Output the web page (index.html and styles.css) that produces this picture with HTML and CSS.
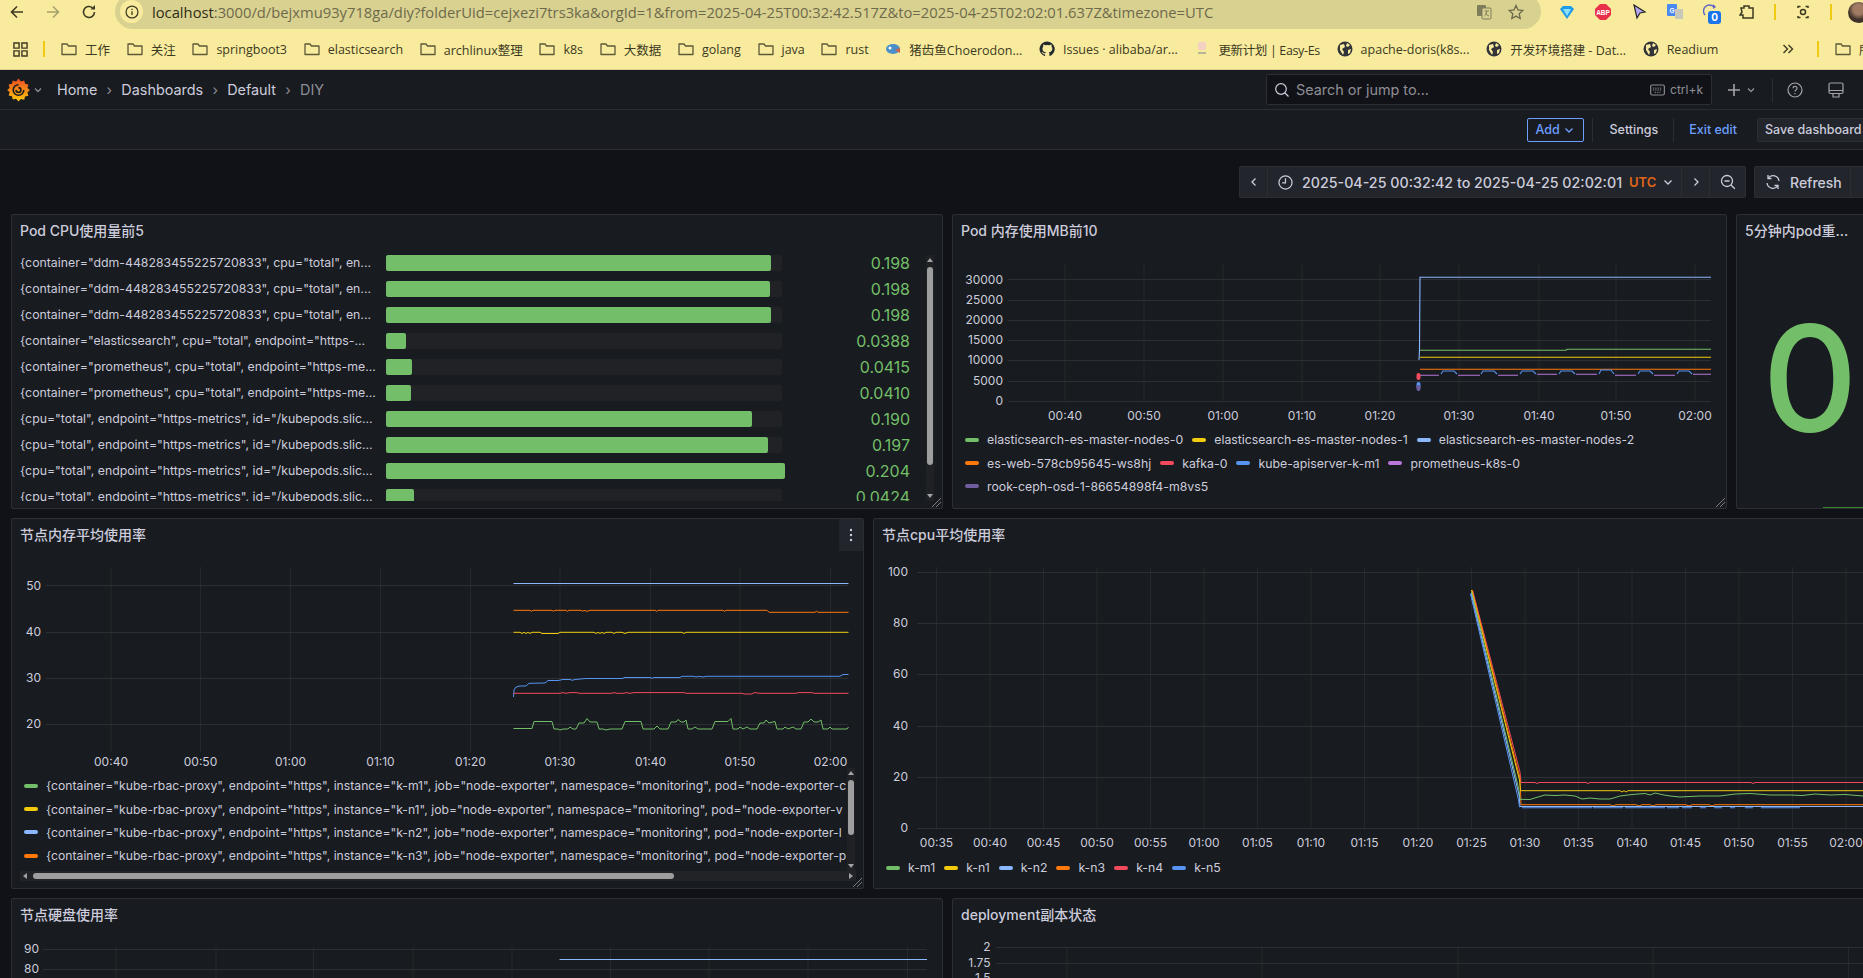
FILE: index.html
```html
<!DOCTYPE html>
<html>
<head>
  <meta charset="UTF-8">
  <title>DIY - Dashboards - Grafana</title>
  <link rel="stylesheet" href="styles.css">
</head>
<body>
  <!-- Browser window top -->
  <div class="browser-bar">
    <svg class="nav-btn" viewBox="0 0 16 16"><path d="M14 8H2.5M8 2.5L2.5 8 8 13.5" fill="none" stroke="#3d3a22" stroke-width="1.6"/></svg>
    <svg class="nav-btn" viewBox="0 0 16 16"><path d="M2 8h11.5M8 2.5L13.5 8 8 13.5" fill="none" stroke="#a5a06e" stroke-width="1.6"/></svg>
    <svg class="nav-btn" viewBox="0 0 16 16"><path d="M13.5 8A5.5 5.5 0 1 1 11.6 3.8" fill="none" stroke="#3d3a22" stroke-width="1.6"/><path d="M9.5 5.5H14V1z" fill="#3d3a22"/></svg>
    <div class="address-bar">
      <span class="site-info"><svg viewBox="0 0 16 16" width="14" height="14"><circle cx="8" cy="8" r="6.8" fill="none" stroke="#3d3a22" stroke-width="1.4"/><path d="M8 7v4.5M8 4.2v1.4" stroke="#3d3a22" stroke-width="1.5"/></svg></span>
      <span class="url"><b>localhost</b>:3000/d/bejxmu93y718ga/diy?folderUid=cejxezi7trs3ka&amp;orgId=1&amp;from=2025-04-25T00:32:42.517Z&amp;to=2025-04-25T02:02:01.637Z&amp;timezone=UTC</span>
      <svg class="addr-icon" viewBox="0 0 16 16"><rect x="1" y="1" width="9" height="11" rx="1" fill="#7f7c5c"/><rect x="6" y="4" width="9" height="11" rx="1" fill="#d9d190" stroke="#7f7c5c"/><path d="M8.5 7h4.5M10.5 7c0 3-1 4.500-2 5M9.500 9c1 1.500 2 2.500 3.500 3" stroke="#7f7c5c" fill="none"/></svg>
      <svg class="addr-icon star" viewBox="0 0 16 16"><path d="M8 1.5l2 4.500 4.800.5-3.600 3.200 1 4.800L8 12.100 3.800 14.500l1-4.800L1.200 6.500 6 6z" fill="none" stroke="#6d6a4c" stroke-width="1.300"/></svg>
    </div>
    <div class="ext-icons">
      <svg viewBox="0 0 16 16"><path d="M1 5l3-3h8l3 3-7 10z" fill="#1e9be8"/><path d="M4 5h8L8 12z" fill="#8fe0fb"/></svg>
      <svg viewBox="0 0 16 16"><path d="M5 0h6l5 5v6l-5 5H5l-5-5V5z" fill="#e8304b"/><text x="8" y="10.500" class="abp">ABP</text></svg>
      <svg viewBox="0 0 16 16"><path d="M3 1l11 7-5 1-3 5z" fill="#b9a8f0" stroke="#222" stroke-width="1.200"/></svg>
      <svg viewBox="0 0 16 16"><rect x="0" y="0" width="10" height="12" rx="1" fill="#4a8af0"/><rect x="8" y="5" width="8" height="10" fill="#c9c8b8"/><text x="5" y="9" class="abp">G</text></svg>
      <span class="ext-badge-wrap"><svg viewBox="0 0 16 16"><path d="M2 11A5.500 5.500 0 0 1 11 3" fill="none" stroke="#5d63c9" stroke-width="1.400"/><path d="M10 0l3 3-3 2z" fill="#5d63c9"/></svg><span class="ext-badge">0</span></span>
      <svg viewBox="0 0 16 16"><path d="M2 4h3V2h5v2h4v10H4v-3H1l2-3-1-4z" fill="none" stroke="#3d3a22" stroke-width="1.500"/></svg>
      <i class="toolbar-divider"></i>
      <svg viewBox="0 0 16 16"><path d="M3 4V2.500h2.500M10.500 2.500H13V4M13 12v1.500h-2.500M5.500 13.500H3V12" fill="none" stroke="#3d3a22" stroke-width="1.500"/><circle cx="8" cy="8" r="2.500" fill="none" stroke="#3d3a22" stroke-width="1.500"/></svg>
      <i class="toolbar-divider"></i>
      <span class="avatar"></span>
    </div>
  </div>

  <div class="bookmarks">
    <svg class="apps-icon" viewBox="0 0 16 16"><path d="M1 1h5.500v5.500H1zM9.500 1H15v5.500H9.500zM1 9.500h5.500V15H1zM9.500 9.500H15V15H9.500z" fill="none" stroke="#3d3a22" stroke-width="1.500"/></svg>
    <i class="toolbar-divider"></i>
    <div class="bookmark"><svg viewBox="0 0 16 16" class="folder"><path d="M1 3h5l1.500 2H15v8.500H1z"/></svg>工作</div>
    <div class="bookmark"><svg viewBox="0 0 16 16" class="folder"><path d="M1 3h5l1.500 2H15v8.500H1z"/></svg>关注</div>
    <div class="bookmark"><svg viewBox="0 0 16 16" class="folder"><path d="M1 3h5l1.500 2H15v8.500H1z"/></svg>springboot3</div>
    <div class="bookmark"><svg viewBox="0 0 16 16" class="folder"><path d="M1 3h5l1.500 2H15v8.500H1z"/></svg>elasticsearch</div>
    <div class="bookmark"><svg viewBox="0 0 16 16" class="folder"><path d="M1 3h5l1.500 2H15v8.500H1z"/></svg>archlinux整理</div>
    <div class="bookmark"><svg viewBox="0 0 16 16" class="folder"><path d="M1 3h5l1.500 2H15v8.500H1z"/></svg>k8s</div>
    <div class="bookmark"><svg viewBox="0 0 16 16" class="folder"><path d="M1 3h5l1.500 2H15v8.500H1z"/></svg>大数据</div>
    <div class="bookmark"><svg viewBox="0 0 16 16" class="folder"><path d="M1 3h5l1.500 2H15v8.500H1z"/></svg>golang</div>
    <div class="bookmark"><svg viewBox="0 0 16 16" class="folder"><path d="M1 3h5l1.500 2H15v8.500H1z"/></svg>java</div>
    <div class="bookmark"><svg viewBox="0 0 16 16" class="folder"><path d="M1 3h5l1.500 2H15v8.500H1z"/></svg>rust</div>
    <div class="bookmark"><svg viewBox="0 0 16 16"><ellipse cx="8" cy="8" rx="7" ry="5" fill="#4a90c8"/><circle cx="5" cy="7" r="1.500" fill="#fff"/><path d="M10 9l5 3v-5z" fill="#d0604a"/></svg>猪齿鱼Choerodon...</div>
    <div class="bookmark"><svg viewBox="0 0 16 16"><path d="M8 .5a7.500 7.500 0 0 0-2.400 14.600c.4.1.5-.2.5-.4v-1.400c-2.100.5-2.500-1-2.500-1-.3-.9-.8-1.100-.8-1.100-.7-.5.1-.5.1-.5.8.1 1.200.8 1.200.8.7 1.200 1.800.8 2.300.6.1-.5.300-.8.500-1-1.700-.2-3.400-.8-3.400-3.700 0-.8.3-1.500.8-2-.1-.2-.3-1 .1-2 0 0 .6-.2 2.100.8a7 7 0 0 1 3.800 0c1.500-1 2.100-.8 2.100-.8.4 1 .2 1.800.1 2 .5.500.8 1.200.8 2 0 2.900-1.800 3.500-3.400 3.700.3.2.5.7.5 1.400v2.100c0 .2.100.5.500.4A7.500 7.500 0 0 0 8 .5z" fill="#24292f"/></svg>Issues · alibaba/ar...</div>
    <div class="bookmark tight"><svg viewBox="0 0 16 16"><rect x="4" y="1" width="8" height="8" rx="2" fill="#f4cfc4"/><rect x="4" y="11" width="8" height="2" fill="#b8b498"/></svg>更新计划 | Easy-Es</div>
    <div class="bookmark"><svg viewBox="0 0 16 16" class="globe"><circle cx="8" cy="8" r="7.500"/><path d="M3 4l4-1 1 3-3 2 2 3-1 3-3-5zM10 2l3 2-2 2-2-1zM11 9l3-1-1 4-2 1z"/></svg>apache-doris(k8s...</div>
    <div class="bookmark"><svg viewBox="0 0 16 16" class="globe"><circle cx="8" cy="8" r="7.500"/><path d="M3 4l4-1 1 3-3 2 2 3-1 3-3-5zM10 2l3 2-2 2-2-1zM11 9l3-1-1 4-2 1z"/></svg>开发环境搭建 - Dat...</div>
    <div class="bookmark"><svg viewBox="0 0 16 16" class="globe"><circle cx="8" cy="8" r="7.500"/><path d="M3 4l4-1 1 3-3 2 2 3-1 3-3-5zM10 2l3 2-2 2-2-1zM11 9l3-1-1 4-2 1z"/></svg>Readium</div>
    <div class="bookmarks-end">
      <svg class="more-marks" viewBox="0 0 12 10" width="12" height="10"><path d="M1.500 1l4 4-4 4M6.500 1l4 4-4 4" fill="none" stroke="#3d3a22" stroke-width="1.400"/></svg>
      <i class="toolbar-divider"></i>
      <div class="bookmark"><svg viewBox="0 0 16 16" class="folder"><path d="M1 3h5l1.500 2H15v8.500H1z"/></svg>所</div>
    </div>
  </div>

  <!-- Grafana top nav -->
  <div class="topnav">
    <svg class="logo" viewBox="0 0 24 24">
      <defs><linearGradient id="logo-grad" x1="0" y1="0" x2="0" y2="1"><stop offset="0" stop-color="#ee4a25"/><stop offset="1" stop-color="#fbca0a"/></linearGradient></defs>
      <path d="M12 0l2.500 3 3.500-1 .8 3.500 3.500.8-1 3.500 2.500 2.200-2.500 2.500 1 3.500-3.500.8-.8 3.500-3.500-1L12 24l-2.500-3-3.500 1-.8-3.500L1.700 17.700l1-3.500L.2 12l2.500-2.200-1-3.500 3.500-.8.8-3.500 3.500 1z" fill="url(#logo-grad)"/>
      <path d="M12 6.500a5.500 5.500 0 1 0 5.500 5.500M12 9.500a2.500 2.500 0 1 1-2.500 2.500" fill="none" stroke="#181b1f" stroke-width="1.700"/>
    </svg>
    <svg class="logo-chevron" viewBox="0 0 10 10"><path d="M2 3.500l3 3 3-3" fill="none" stroke="#8e8e96" stroke-width="1.300"/></svg>
    <div class="breadcrumbs">
      <span>Home</span><i>›</i><span>Dashboards</span><i>›</i><span>Default</span><i>›</i><span class="current">DIY</span>
    </div>
    <div class="topnav-right">
      <div class="search-box">
        <svg viewBox="0 0 16 16" width="16" height="16"><circle cx="7" cy="7" r="5.300" fill="none" stroke="#ccccdc" stroke-width="1.200"/><path d="M11 11l3.500 3.500" stroke="#ccccdc" stroke-width="1.200"/></svg>
        <span class="search-text">Search or jump to...</span>
        <svg class="kbd-icon" viewBox="0 0 16 12" width="15" height="12"><rect x=".7" y=".7" width="14.600" height="10.600" rx="1.500" fill="none" stroke="#8e8e96" stroke-width="1.200"/><path d="M3 4h10M3 6h10M5 8.500h6" stroke="#8e8e96" stroke-dasharray="1.500 1"/></svg>
        <span class="search-hint">ctrl+k</span>
      </div>
      <svg class="plus-icon" viewBox="0 0 14 14" width="14" height="14"><path d="M7 1v12M1 7h12" stroke="#a3a3ad" stroke-width="1.600"/></svg>
      <svg class="nav-chevron" viewBox="0 0 10 10" width="10" height="10"><path d="M2 3.500l3 3 3-3" fill="none" stroke="#8e8e96" stroke-width="1.300"/></svg>
      <i class="nav-divider"></i>
      <svg class="help-icon" viewBox="0 0 16 16" width="16" height="16"><circle cx="8" cy="8" r="7" fill="none" stroke="#a3a3ad" stroke-width="1.200"/><path d="M6 6.300a2 2 0 1 1 3 1.700c-.7.400-1 .8-1 1.500M8 11v1.300" fill="none" stroke="#a3a3ad" stroke-width="1.200"/></svg>
      <svg class="monitor-icon" viewBox="0 0 16 16" width="16" height="16"><rect x="1" y="1" width="14" height="10.500" rx="1.500" fill="none" stroke="#a3a3ad" stroke-width="1.200"/><path d="M1 8.500h14M5 15h6v-3.500H5z" fill="none" stroke="#a3a3ad" stroke-width="1.200"/></svg>
    </div>
  </div>

  <div class="toolbar">
    <button class="add-button">Add <svg viewBox="0 0 10 10" width="10" height="10"><path d="M1.500 3.500L5 7l3.500-3.500" fill="none" stroke="#6e9fff" stroke-width="1.300"/></svg></button>
    <i class="nav-divider"></i>
    <span class="toolbar-link">Settings</span>
    <i class="nav-divider"></i>
    <span class="toolbar-link blue">Exit edit</span>
    <button class="save-button">Save dashboard</button>
  </div>

  <div class="time-row">
    <div class="time-group">
      <div class="time-cell arrow"><svg viewBox="0 0 10 10" width="10" height="10"><path d="M6.500 1.500L3 5l3.500 3.500" fill="none" stroke="#ccccdc" stroke-width="1.300"/></svg></div>
      <div class="time-cell range">
        <svg viewBox="0 0 16 16" width="15" height="15"><circle cx="8" cy="8" r="7" fill="none" stroke="#ccccdc" stroke-width="1.300"/><path d="M8 3.500V8.500H4.500" fill="none" stroke="#ccccdc" stroke-width="1.300"/></svg>
        <span class="time-text">2025-04-25 00:32:42 to 2025-04-25 02:02:01</span>
        <span class="time-zone">UTC</span>
        <svg viewBox="0 0 10 10" width="10" height="10"><path d="M1.500 3.500L5 7l3.500-3.500" fill="none" stroke="#ccccdc" stroke-width="1.300"/></svg>
      </div>
      <div class="time-cell arrow"><svg viewBox="0 0 10 10" width="10" height="10"><path d="M3.500 1.500L7 5 3.500 8.500" fill="none" stroke="#ccccdc" stroke-width="1.300"/></svg></div>
      <div class="time-cell zoom"><svg viewBox="0 0 16 16" width="16" height="16"><circle cx="7" cy="7" r="5.500" fill="none" stroke="#ccccdc" stroke-width="1.300"/><path d="M11 11l3.800 3.800M4.500 7h5" stroke="#ccccdc" stroke-width="1.300"/></svg></div>
    </div>
    <div class="refresh-group">
      <div class="refresh-main">
        <svg viewBox="0 0 16 16" width="16" height="16"><path d="M14 7A6 6 0 0 0 3.200 4.200M2 9a6 6 0 0 0 10.800 2.800" fill="none" stroke="#ccccdc" stroke-width="1.300"/><path d="M3 1v3.500h3.500M13 15v-3.500H9.500" fill="none" stroke="#ccccdc" stroke-width="1.300"/></svg>
        Refresh
      </div>
    </div>
  </div>

  <!-- Dashboard panels -->
  <div class="panel-row row-one">
    <div class="panel panel-cpu">
      <div class="panel-title">Pod CPU使用量前5</div>
      <div class="bar-list">
        <div class="bar-row"><div class="bar-label">{container="ddm-448283455225720833", cpu="total", en...</div><div class="bar-track"><div class="bar-fill" style="width:385px"></div></div><div class="bar-value">0.198</div></div>
        <div class="bar-row"><div class="bar-label">{container="ddm-448283455225720833", cpu="total", en...</div><div class="bar-track"><div class="bar-fill" style="width:384px"></div></div><div class="bar-value">0.198</div></div>
        <div class="bar-row"><div class="bar-label">{container="ddm-448283455225720833", cpu="total", en...</div><div class="bar-track"><div class="bar-fill" style="width:385px"></div></div><div class="bar-value">0.198</div></div>
        <div class="bar-row"><div class="bar-label">{container="elasticsearch", cpu="total", endpoint="https-...</div><div class="bar-track"><div class="bar-fill" style="width:20px"></div></div><div class="bar-value">0.0388</div></div>
        <div class="bar-row"><div class="bar-label">{container="prometheus", cpu="total", endpoint="https-me...</div><div class="bar-track"><div class="bar-fill" style="width:26px"></div></div><div class="bar-value">0.0415</div></div>
        <div class="bar-row"><div class="bar-label">{container="prometheus", cpu="total", endpoint="https-me...</div><div class="bar-track"><div class="bar-fill" style="width:25px"></div></div><div class="bar-value">0.0410</div></div>
        <div class="bar-row"><div class="bar-label">{cpu="total", endpoint="https-metrics", id="/kubepods.slic...</div><div class="bar-track"><div class="bar-fill" style="width:366px"></div></div><div class="bar-value">0.190</div></div>
        <div class="bar-row"><div class="bar-label">{cpu="total", endpoint="https-metrics", id="/kubepods.slic...</div><div class="bar-track"><div class="bar-fill" style="width:382px"></div></div><div class="bar-value">0.197</div></div>
        <div class="bar-row"><div class="bar-label">{cpu="total", endpoint="https-metrics", id="/kubepods.slic...</div><div class="bar-track"><div class="bar-fill" style="width:399px"></div></div><div class="bar-value">0.204</div></div>
        <div class="bar-row"><div class="bar-label">{cpu="total", endpoint="https-metrics", id="/kubepods.slic...</div><div class="bar-track"><div class="bar-fill" style="width:28px"></div></div><div class="bar-value">0.0424</div></div>
      </div>
      <div class="vscroll overlay"><b class="up"></b><span class="vthumb"></span><b class="down"></b></div>
      <svg class="resize-handle" viewBox="0 0 10 10"><path d="M1 10L10 1M5 10l5-5" stroke="#7b7b84"/></svg>
    </div>

    <div class="panel panel-mem">
      <div class="panel-title">Pod 内存使用MB前10</div>
      <svg class="chart" width="773" height="180" viewBox="953 248 773 180">
        <g class="grid-v">
          <path d="M1065 263V401M1144 263V401M1223 263V401M1302 263V401M1380 263V401M1459 263V401M1539 263V401M1616 263V401M1695 263V401"/>
        </g>
        <g class="grid-h">
          <path d="M1008 279.500H1711M1008 300.500H1711M1008 320.500H1711M1008 340.500H1711M1008 360.500H1711M1008 381.500H1711M1008 401.500H1711"/>
        </g>
        <g class="axis end">
          <text x="1003" y="283.500">30000</text><text x="1003" y="304">25000</text><text x="1003" y="324">20000</text><text x="1003" y="344">15000</text><text x="1003" y="364">10000</text><text x="1003" y="385">5000</text><text x="1003" y="405">0</text>
        </g>
        <g class="axis mid">
          <text x="1065" y="420">00:40</text><text x="1144" y="420">00:50</text><text x="1223" y="420">01:00</text><text x="1302" y="420">01:10</text><text x="1380" y="420">01:20</text><text x="1459" y="420">01:30</text><text x="1539" y="420">01:40</text><text x="1616" y="420">01:50</text><text x="1695" y="420">02:00</text>
        </g>
        <polyline class="line" stroke="#73bf69" points="1419,350.300 1566,350.300 1567,349.300 1711,349.300"/>
        <polyline class="line" stroke="#f2cc0c" points="1420,357.300 1711,357.300"/>
        <polyline class="line" stroke="#ff780a" points="1420,369.300 1711,369.300"/>
        <polyline class="line" stroke="#8ab8ff" points="1419,360 1419.500,350 1420,277.300 1711,277.300"/>
        <path class="line" stroke="#b877d9" d="M1420 375.300H1439M1458 375.300H1480M1498 375.300H1518M1537 374.300H1557M1576 374.300H1597M1615 375.300H1636M1654 375.300H1675M1693 374.300H1711"/>
        <path class="line" stroke="#5794f2" d="M1441 374L1443 371H1454L1457 374M1481 374L1483 371H1494L1497 374M1520 374L1522 371H1533L1536 374M1559 374L1561 371H1572L1575 374M1599 374L1601 370H1611L1614 374M1638 374L1640 371H1650L1653 374M1677 374L1679 371H1689L1692 374"/>
        <path class="dot" stroke="#f2495c" d="M1418.500 375V378"/>
        <path class="dot" stroke="#5794f2" d="M1418.500 384V387"/>
        <path class="dot" stroke="#705da0" d="M1418.500 387V389"/>
      </svg>
      <div class="legend wrap">
        <div class="legend-item"><i style="background:#73bf69"></i>elasticsearch-es-master-nodes-0</div>
        <div class="legend-item"><i style="background:#f2cc0c"></i>elasticsearch-es-master-nodes-1</div>
        <div class="legend-item"><i style="background:#8ab8ff"></i>elasticsearch-es-master-nodes-2</div>
        <div class="legend-item"><i style="background:#ff780a"></i>es-web-578cb95645-ws8hj</div>
        <div class="legend-item"><i style="background:#f2495c"></i>kafka-0</div>
        <div class="legend-item"><i style="background:#5794f2"></i>kube-apiserver-k-m1</div>
        <div class="legend-item"><i style="background:#b877d9"></i>prometheus-k8s-0</div>
        <div class="legend-item"><i style="background:#705da0"></i>rook-ceph-osd-1-86654898f4-m8vs5</div>
      </div>
      <svg class="resize-handle" viewBox="0 0 10 10"><path d="M1 10L10 1M5 10l5-5" stroke="#7b7b84"/></svg>
    </div>

    <div class="panel panel-stat">
      <div class="panel-title">5分钟内pod重...</div>
      <div class="stat-value">0</div>
      <span class="stat-spark"></span>
    </div>
  </div>

  <div class="panel-row row-two">
    <div class="panel panel-node-mem">
      <div class="panel-title">节点内存平均使用率</div>
      <div class="panel-menu">
        <svg viewBox="0 0 4 14" width="4" height="14"><circle cx="2" cy="2" r="1.200" fill="#ccccdc"/><circle cx="2" cy="7" r="1.200" fill="#ccccdc"/><circle cx="2" cy="12" r="1.200" fill="#ccccdc"/></svg>
      </div>
      <svg class="chart" width="851" height="216" viewBox="12 552 851 216">
        <g class="grid-v">
          <path d="M111 567V752M200.500 567V752M290.500 567V752M380.500 567V752M470.500 567V752M560 567V752M650.500 567V752M740 567V752M830.500 567V752"/>
        </g>
        <g class="grid-h">
          <path d="M46 585.500H848M46 632.500H848M46 678.500H848M46 724.500H848"/>
        </g>
        <g class="axis end">
          <text x="41" y="589.500">50</text><text x="41" y="636">40</text><text x="41" y="682">30</text><text x="41" y="728">20</text>
        </g>
        <g class="axis mid">
          <text x="111" y="766">00:40</text><text x="200.500" y="766">00:50</text><text x="290.500" y="766">01:00</text><text x="380.500" y="766">01:10</text><text x="470.500" y="766">01:20</text><text x="560" y="766">01:30</text><text x="650.500" y="766">01:40</text><text x="740" y="766">01:50</text><text x="830.500" y="766">02:00</text>
        </g>
        <polyline class="thin" stroke="#8ab8ff" points="513.500,583.500 848.500,583.500"/>
        <polyline class="thin" stroke="#ff780a" points="513.500,610.300 530,610.300 531.500,611.300 533,610.300 552,610.300 553.500,611.300 555,610.300 566,610.300 567.500,611.300 569,610.300 581,610.300 582.500,611.300 584,610.300 587,611.300 590,610.300 655,610.300 656.500,611.300 658,610.300 723,610.300 724.500,611.300 726,610.300 767,610.300 769,612.300 815,612.300 816.500,611.300 818,612.300 848.500,612.300"/>
        <polyline class="thin" stroke="#f2cc0c" points="513.500,632.300 520,632.300 522,633.500 524,632.300 526,633.500 528,632.300 530,633.500 532,632.300 540,632.300 542,633.500 558,633.500 560,632.300 594,632.300 596,633.500 598,632.300 600,633.500 602,632.300 604,633.500 606,632.300 612,632.300 614,633.500 616,632.300 622,632.300 625,633.500 628,632.300 682,632.300 684,633.500 686,632.300 848.500,632.300"/>
        <polyline class="thin" stroke="#5794f2" points="513.500,697 514,690 516,687 520,686 526,686 529,683.300 545,683 548,680.500 558,680.500 563,679.500 570,679.500 572,680.300 575,679.500 586,678.500 622,678.500 625,677.500 650,677.500 652,678.300 654,677.500 680,677.500 682,676.300 694,676.300 696,677 699,676.300 703,677 706,676.300 840,676.300 843,674.500 848.500,674.500"/>
        <polyline class="thin" stroke="#f2495c" points="513.500,693.300 560,693.300 563,692.600 566,693.300 570,692.600 576,692.600 580,693.300 612,693.300 614,692.600 617,693.300 624,693.300 626,692.600 630,693.300 634,692.600 684,692.600 686,693.300 742,693.300 744,694 752,694 754,692.600 760,693.300 796,693.300 798,692.600 812,692.600 814,693.300 848.500,693.300"/>
        <polyline class="thin" stroke="#73bf69" points="513.500,728.500 532,728.500 534,721.500 552,721.500 554,729 558,729 560,730 563,729 568,729 570,727 573,729 576,729 579,723 584,723 587,718.500 590,722 597,722 599,729 603,729 606,730 610,729 622,729 625,721.500 641,721.500 643,729 654,729 657,726 660,729 668,729 671,722 676,722 678,719.500 681,722 684,722 686,720 688,729 692,729 695,727 698,729 712,729 715,721.500 728,721.500 731,718.500 733,729 738,729 740,727 743,729 747,727 750,729 757,729 760,723 764,723 766,720 769,723 775,721.500 777,729 783,729 785,727 788,729 793,727 796,729 801,729 804,722 808,722 811,719 814,722 818,722 821,720 823,729 828,729 830,727 832,729 847,729 848.500,727"/>
      </svg>
      <div class="legend-scroll">
        <div class="legend-lines">
          <div class="legend-item"><i style="background:#73bf69"></i>{container="kube-rbac-proxy", endpoint="https", instance="k-m1", job="node-exporter", namespace="monitoring", pod="node-exporter-c</div>
          <div class="legend-item"><i style="background:#f2cc0c"></i>{container="kube-rbac-proxy", endpoint="https", instance="k-n1", job="node-exporter", namespace="monitoring", pod="node-exporter-v</div>
          <div class="legend-item"><i style="background:#8ab8ff"></i>{container="kube-rbac-proxy", endpoint="https", instance="k-n2", job="node-exporter", namespace="monitoring", pod="node-exporter-l</div>
          <div class="legend-item"><i style="background:#ff780a"></i>{container="kube-rbac-proxy", endpoint="https", instance="k-n3", job="node-exporter", namespace="monitoring", pod="node-exporter-p</div>
        </div>
        <div class="vscroll"><b class="up"></b><span class="vthumb"></span><b class="down"></b></div>
      </div>
      <div class="hscroll"><b class="left"></b><span class="hthumb"></span><b class="right"></b></div>
      <svg class="resize-handle" viewBox="0 0 10 10"><path d="M1 10L10 1M5 10l5-5" stroke="#7b7b84"/></svg>
    </div>

    <div class="panel panel-node-cpu">
      <div class="panel-title">节点cpu平均使用率</div>
      <svg class="chart" width="1000" height="304" viewBox="874 552 1000 304">
        <g class="grid-v">
          <path d="M936.500 567V828M990 567V828M1043.500 567V828M1097 567V828M1150.500 567V828M1204 567V828M1257.500 567V828M1311 567V828M1364.500 567V828M1418 567V828M1471.500 567V828M1525 567V828M1578.500 567V828M1632 567V828M1685.500 567V828M1739 567V828M1792.500 567V828M1846 567V828"/>
        </g>
        <g class="grid-h">
          <path d="M917 572.500H1874M917 623.500H1874M917 674.500H1874M917 726.500H1874M917 777.500H1874M917 828.500H1874"/>
        </g>
        <g class="axis end">
          <text x="908" y="576">100</text><text x="908" y="627">80</text><text x="908" y="678">60</text><text x="908" y="730">40</text><text x="908" y="781">20</text><text x="908" y="832">0</text>
        </g>
        <g class="axis mid">
          <text x="936.500" y="847">00:35</text><text x="990" y="847">00:40</text><text x="1043.500" y="847">00:45</text><text x="1097" y="847">00:50</text><text x="1150.500" y="847">00:55</text><text x="1204" y="847">01:00</text><text x="1257.500" y="847">01:05</text><text x="1311" y="847">01:10</text><text x="1364.500" y="847">01:15</text><text x="1418" y="847">01:20</text><text x="1471.500" y="847">01:25</text><text x="1525" y="847">01:30</text><text x="1578.500" y="847">01:35</text><text x="1632" y="847">01:40</text><text x="1685.500" y="847">01:45</text><text x="1739" y="847">01:50</text><text x="1792.500" y="847">01:55</text><text x="1846" y="847">02:00</text>
        </g>
        <polyline class="thin" stroke="#f2495c" points="1472.500,590 1520,772 1521,782.500 1535,782.500 1537,783.500 1539,782.500 1586,782.500 1588,783.500 1590,782.500 1751,782.500 1753,783.500 1755,782.500 1863,782.500"/>
        <polyline class="thin" stroke="#ff780a" points="1472,590 1520,778 1521,804.700 1610,804.700 1613,806 1616,804.700 1636,804.700 1639,806 1642,804.700 1650,804.700 1653,806 1656,804.700 1686,804.700 1689,806 1692,804.700 1709,804.700 1712,806 1715,804.700 1863,804.700"/>
        <polyline class="thin" stroke="#f2cc0c" points="1471.500,590 1519.500,780 1520.500,790.700 1620,790.700 1622,792 1624,790.700 1626,792 1628,790.700 1863,790.700"/>
        <polyline class="thin" stroke="#73bf69" points="1471.500,592 1519,790 1520,799.300 1530,799.500 1538,797 1545,795 1555,795.500 1565,795 1575,796 1582,799 1590,798 1600,799 1610,799 1620,796 1632,794.500 1645,793.500 1650,795 1655,793 1664,795 1670,796 1680,797 1700,796 1720,796 1735,794 1750,793.500 1770,795 1790,795 1802,795.500 1815,794 1830,795 1845,794.500 1863,796"/>
        <polyline class="thin" stroke="#8ab8ff" points="1471,593 1519,795 1520,806.500 1863,806.500"/>
        <path class="line" stroke="#5794f2" stroke-dasharray="70 1 30 2 40 2 12 3 10 8 6 8 8 8 5 10 8 8" d="M1522 807.800H1800"/>
        <polyline class="thin" stroke="#5794f2" points="1470.500,594 1518.500,800 1519.500,807.300"/>
      </svg>
      <div class="legend inline">
        <div class="legend-item"><i style="background:#73bf69"></i>k-m1</div>
        <div class="legend-item"><i style="background:#f2cc0c"></i>k-n1</div>
        <div class="legend-item"><i style="background:#8ab8ff"></i>k-n2</div>
        <div class="legend-item"><i style="background:#ff780a"></i>k-n3</div>
        <div class="legend-item"><i style="background:#f2495c"></i>k-n4</div>
        <div class="legend-item"><i style="background:#5794f2"></i>k-n5</div>
      </div>
    </div>
  </div>

  <div class="panel-row row-three">
    <div class="panel panel-disk">
      <div class="panel-title">节点硬盘使用率</div>
      <svg class="chart" width="930" height="60" viewBox="12 932 930 60">
        <g class="grid-v">
          <path d="M116 947V992M216 947V992M313.500 947V992M413 947V992M512 947V992M610.500 947V992M709 947V992M808 947V992M907.500 947V992"/>
        </g>
        <g class="grid-h"><path d="M43 949.500H927M43 969.500H927"/></g>
        <g class="axis end"><text x="39" y="953">90</text><text x="39" y="973">80</text></g>
        <polyline class="thin" stroke="#8ab8ff" points="559.500,959.500 927,959.500"/>
      </svg>
    </div>
    <div class="panel panel-deploy">
      <div class="panel-title">deployment副本状态</div>
      <svg class="chart" width="1000" height="60" viewBox="953 932 1000 60">
        <g class="grid-v">
          <path d="M1067 947V992M1262 947V992M1458 947V992M1653 947V992M1848.500 947V992"/>
        </g>
        <g class="grid-h"><path d="M996 947.500H1953M996 963.500H1953M996 978.500H1953"/></g>
        <g class="axis end"><text x="990.500" y="951">2</text><text x="990.500" y="967">1.75</text><text x="990.500" y="982">1.5</text></g>
      </svg>
    </div>
  </div>
</body>
</html>
```

FILE: styles.css
```css
html, body {
  margin: 0;
  width: 1863px;
  height: 978px;
  overflow: hidden;
}

body {
  background: #111217;
  color: #ccccdc;
  font-family: Inter, "Noto Sans CJK SC", sans-serif;
  font-size: 12px;
}

i {
  font-style: normal;
}

/* browser window */
.browser-bar {
  display: flex;
  align-items: flex-start;
  height: 29px;
  background: #f8eb9d;
  color: #3d3a22;
}

.nav-btn {
  width: 16px;
  height: 16px;
  margin: 4px 0 0 9px;
  flex: none;
}

.nav-btn + .nav-btn {
  margin-left: 20px;
}

.address-bar {
  display: flex;
  align-items: center;
  width: 1426px;
  height: 35px;
  margin: -6px 0 0 18px;
  padding: 0 17px 0 5px;
  box-sizing: border-box;
  border-radius: 18px;
  background: #d9d190;
  flex: none;
}

.site-info {
  display: flex;
  align-items: center;
  justify-content: center;
  width: 23px;
  height: 23px;
  margin-right: 9px;
  border-radius: 50%;
  background: #f8eb9d;
  flex: none;
}

.url {
  flex: 1;
  font-family: "Open Sans", sans-serif;
  font-size: 14.750px;
  color: #6d6a4c;
  white-space: nowrap;
  overflow: hidden;
}

.url b {
  font-weight: 400;
  color: #2e2c18;
}

.addr-icon {
  width: 16px;
  height: 16px;
  flex: none;
}

.addr-icon.star {
  margin-left: 16px;
}

.ext-icons {
  display: flex;
  align-items: center;
  gap: 20px;
  height: 24px;
  margin-left: 18px;
}

.ext-icons svg {
  width: 16px;
  height: 16px;
  display: block;
}

.abp {
  font: bold 6.500px "Liberation Sans", sans-serif;
  fill: #fff;
  text-anchor: middle;
}

.ext-badge-wrap {
  position: relative;
  display: block;
}

.ext-badge {
  position: absolute;
  left: 5px;
  top: 7px;
  width: 13px;
  height: 13px;
  border-radius: 3px;
  background: #1a73e8;
  color: #fff;
  font-size: 10px;
  font-weight: 700;
  line-height: 13px;
  text-align: center;
}

.toolbar-divider {
  display: block;
  width: 2px;
  height: 16px;
  background: #f0ca10;
  flex: none;
}

.ext-icons .toolbar-divider {
  margin: 0 -1px;
}

.avatar {
  width: 21px;
  height: 21px;
  border-radius: 50%;
  background: radial-gradient(circle at 50% 35%, #a07a62 0 30%, #3f312a 60%);
  margin-left: -3px;
  flex: none;
}

.bookmarks {
  display: flex;
  align-items: center;
  height: 41px;
  padding-left: 13px;
  box-sizing: border-box;
  background: #f8eb9d;
  border-bottom: 1px solid #dcd088;
  font-family: "Open Sans", "Noto Sans CJK SC", sans-serif;
  font-size: 12.500px;
  color: #3d3a22;
  white-space: nowrap;
  overflow: hidden;
}

.apps-icon {
  width: 15px;
  height: 15px;
  flex: none;
}

.bookmarks > .toolbar-divider {
  margin: 0 16px 0 15px;
}

.bookmark {
  display: flex;
  align-items: center;
  gap: 8px;
  margin-right: 16.700px;
  flex: none;
}

.bookmark.tight {
  letter-spacing: -.35px;
}

.bookmark svg {
  width: 16px;
  height: 16px;
  flex: none;
}

.folder path {
  fill: none;
  stroke: #5c5838;
  stroke-width: 1.300;
  stroke-linejoin: round;
}

.globe circle {
  fill: #33343a;
}

.globe path {
  fill: #f8eb9d;
}

.bookmarks-end {
  display: flex;
  align-items: center;
  margin-left: auto;
  width: 86px;
  flex: none;
}

.more-marks {
  margin: 0 23px 0 5px;
  flex: none;
}

.bookmarks-end .toolbar-divider {
  margin-right: 16px;
}

.bookmarks-end .bookmark {
  margin-right: 0;
}

/* grafana top nav */
.topnav {
  display: flex;
  align-items: center;
  height: 40px;
  padding-left: 7px;
  box-sizing: border-box;
  background: #181b1f;
  border-bottom: 1px solid #2c2e33;
}

.logo {
  width: 23px;
  height: 24px;
  flex: none;
}

.logo-chevron {
  width: 10px;
  height: 10px;
  margin: 0 14px 0 3px;
  flex: none;
}

.breadcrumbs {
  display: flex;
  align-items: center;
  font-size: 14.400px;
  color: #ccccdc;
}

.breadcrumbs i {
  width: 24px;
  text-align: center;
  color: #8e8e96;
}

.breadcrumbs .current {
  color: #8e8e96;
}

.topnav-right {
  display: flex;
  align-items: center;
  margin-left: auto;
}

.search-box {
  display: flex;
  align-items: center;
  width: 446px;
  height: 31px;
  padding: 0 8px 0 7px;
  box-sizing: border-box;
  background: #111217;
  border: 1px solid #2c2e33;
  border-radius: 2px;
  color: #8e8e96;
}

.search-text {
  margin-left: 6px;
  flex: 1;
  font-size: 14.400px;
}

.kbd-icon {
  margin-right: 5px;
}

.plus-icon {
  margin-left: 15px;
}

.nav-chevron {
  margin: 0 16px 0 5px;
}

.nav-divider {
  display: block;
  width: 1px;
  background: #2c2e33;
  height: 24px;
  flex: none;
}

.help-icon {
  margin: 0 25px 0 14px;
}

.monitor-icon {
  margin-right: 19px;
}

/* dashboard toolbar */
.toolbar {
  display: flex;
  align-items: center;
  justify-content: flex-end;
  height: 40px;
  box-sizing: border-box;
  background: #181b1f;
  border-bottom: 1px solid #2c2e33;
  font-size: 12.500px;
  font-weight: 500;
}

.add-button {
  display: flex;
  align-items: center;
  gap: 4px;
  height: 24px;
  width: 57px;
  padding: 0 0 0 8px;
  box-sizing: border-box;
  border: 1px solid #6e9fff;
  border-radius: 2px;
  background: transparent;
  color: #6e9fff;
  font: inherit;
  margin-right: 8px;
}

.toolbar-link {
  padding: 0 15px 0 17px;
}

.toolbar-link.blue {
  color: #6e9fff;
  padding: 0 20px 0 15px;
}

.save-button {
  width: 106px;
  height: 24px;
  padding: 0 0 0 7px;
  text-align: left;
  border: 1px solid #2c2e33;
  border-right: 0;
  border-radius: 2px 0 0 2px;
  background: #22252b;
  color: #ccccdc;
  font: inherit;
  white-space: nowrap;
}

/* time picker row */
.time-row {
  display: flex;
  align-items: flex-start;
  justify-content: flex-end;
  gap: 8px;
  height: 64px;
  padding-top: 16px;
  box-sizing: border-box;
  font-size: 14px;
  font-weight: 500;
}

.time-group,
.refresh-group {
  display: flex;
  height: 32px;
  box-sizing: border-box;
  background: #22252b;
  border: 1px solid #2c2e33;
  border-radius: 2px;
}

.time-cell {
  display: flex;
  align-items: center;
  justify-content: center;
  border-right: 1px solid #2c2e33;
}

.time-cell.arrow {
  width: 27px;
}

.time-cell.range {
  width: 414px;
  justify-content: flex-start;
  padding-left: 10px;
  box-sizing: border-box;
}

.time-cell.zoom {
  width: 35px;
  border-right: 0;
}

.time-text {
  margin-left: 9px;
  font-size: 14.250px;
}

.time-zone {
  margin: 0 7px;
  color: #e0651a;
  font-weight: 600;
  font-size: 13px;
}

.refresh-group {
  width: 109px;
  border-right: 0;
  border-radius: 2px 0 0 2px;
}

.refresh-main {
  display: flex;
  align-items: center;
  gap: 9px;
  width: 96px;
  padding-left: 10px;
  box-sizing: border-box;
  border-right: 1px solid #2c2e33;
}

/* panels */
.panel-row {
  display: flex;
  gap: 9px;
  padding-left: 11px;
  margin-bottom: 9px;
}

.row-one {
  height: 295px;
}

.row-two {
  height: 371px;
}

.row-three {
  height: 100px;
}

.panel {
  position: relative;
  box-sizing: border-box;
  background: #181b1f;
  border: 1px solid #2c2e33;
  border-radius: 2px;
  flex: none;
}

.panel-title {
  height: 33px;
  padding-left: 8px;
  font-size: 14px;
  font-weight: 500;
  line-height: 31px;
  white-space: nowrap;
}

.panel-cpu {
  width: 932px;
}

.panel-mem {
  width: 775px;
}

.panel-stat {
  width: 148px;
}

.panel-node-mem {
  width: 853px;
}

.panel-node-cpu {
  width: 1010px;
}

.panel-disk {
  width: 932px;
}

.panel-deploy {
  width: 1010px;
}

.panel-menu {
  position: absolute;
  right: 0;
  top: 0;
  display: flex;
  align-items: center;
  justify-content: center;
  width: 24px;
  height: 32px;
  background: #22252b;
}

.resize-handle {
  position: absolute;
  right: 1px;
  bottom: 1px;
  width: 10px;
  height: 10px;
}

/* bar gauge */
.bar-list {
  height: 251px;
  margin-top: 2px;
  overflow: hidden;
}

.bar-row {
  display: grid;
  grid-template-columns: 366px 396px 128px;
  align-items: center;
  height: 26px;
  padding-left: 8px;
}

.bar-label {
  margin-top: -1px;
  font-size: 12.300px;
  white-space: nowrap;
  overflow: hidden;
}

.bar-track {
  height: 16px;
  background: #202226;
  border-radius: 2px;
}

.bar-fill {
  height: 16px;
  background: #73bf69;
  border-radius: 2px;
}

.bar-value {
  text-align: right;
  color: #73bf69;
  font-size: 16px;
}

/* scrollbars */
.vscroll {
  display: flex;
  flex-direction: column;
  align-items: center;
  width: 8px;
  background: #1f2125;
  flex: none;
}

.vscroll.overlay {
  position: absolute;
  left: 914px;
  top: 40px;
  height: 246px;
}

.up,
.down,
.left,
.right {
  display: block;
  width: 0;
  height: 0;
  border: 3px solid transparent;
  flex: none;
}

.up {
  border-top: 0;
  border-bottom: 4px solid #a3a3a3;
  margin-top: 3px;
}

.down {
  border-bottom: 0;
  border-top: 4px solid #a3a3a3;
  margin: auto 0 3px;
}

.left {
  border-left: 0;
  border-right: 4px solid #a3a3a3;
  margin-left: 3px;
}

.right {
  border-right: 0;
  border-left: 4px solid #a3a3a3;
  margin-right: 3px;
}

.vthumb {
  display: block;
  width: 6px;
  margin-top: 5px;
  border-radius: 3px;
  background: #9e9e9e;
  flex: none;
}

.overlay .vthumb {
  height: 198px;
}

.legend-scroll .vthumb {
  height: 55px;
}

.hscroll {
  display: flex;
  align-items: center;
  height: 10px;
  width: 836px;
  margin-left: 8px;
  background: #212327;
}

.hthumb {
  display: block;
  width: 641px;
  height: 6px;
  margin-left: 6px;
  margin-right: auto;
  border-radius: 3px;
  background: #9e9e9e;
}

/* stat */
.stat-value {
  display: flex;
  align-items: center;
  justify-content: center;
  height: 261px;
  color: #73bf69;
  font-size: 148px;
  font-weight: 500;
  line-height: 1;
}

.stat-spark {
  position: absolute;
  right: 0;
  bottom: 0;
  width: 60px;
  height: 1px;
  background: #37872d;
}

/* time series */
.chart {
  display: block;
}

.grid-v path {
  stroke: #26282d;
  fill: none;
}

.grid-h path {
  stroke: #2c2f34;
  fill: none;
}

.axis text {
  fill: #ccccdc;
  font-size: 12px;
}

.axis.end text {
  text-anchor: end;
}

.axis.mid text {
  text-anchor: middle;
}

.line {
  fill: none;
  stroke-width: 1.100;
}

.thin {
  fill: none;
  stroke-width: 1;
}

.dot {
  fill: none;
  stroke-width: 4;
  stroke-linecap: round;
}

/* legends */
.legend {
  display: flex;
  flex-wrap: wrap;
  padding-left: 12px;
}

.legend-item {
  display: flex;
  align-items: center;
  height: 23.400px;
  margin-right: 9px;
  font-size: 12.300px;
  white-space: nowrap;
}

.legend-item i {
  display: block;
  width: 14px;
  height: 4px;
  margin-right: 8px;
  border-radius: 2px;
  flex: none;
}

.legend-scroll {
  display: flex;
  gap: 1px;
  height: 103px;
  padding-left: 12px;
}

.legend-lines {
  width: 822px;
  padding-top: 6px;
  overflow: hidden;
  flex: none;
}

.legend-lines .legend-item {
  font-size: 12.200px;
}
```
